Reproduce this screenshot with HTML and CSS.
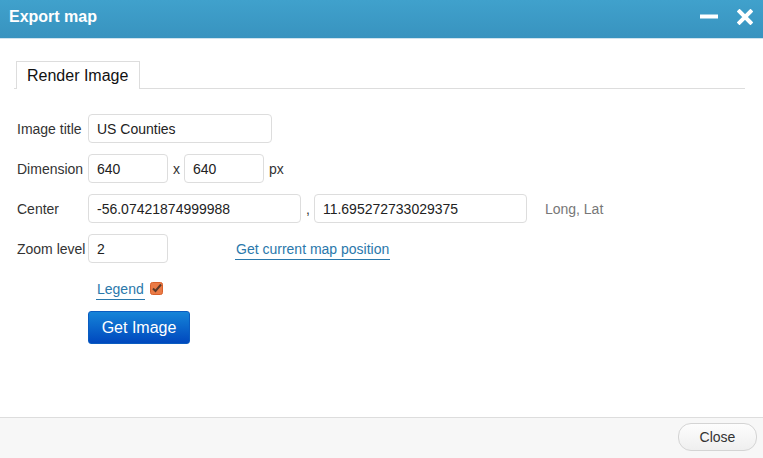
FILE: index.html
```html
<!DOCTYPE html>
<html lang="en">
<head>
    <meta charset="UTF-8">
    <title>Export map</title>
    <link rel="stylesheet" href="styles.css">
</head>
<body>
    <div class="dialog">
        <div class="titlebar">
            <span class="title">Export map</span>
            <div class="win-buttons">
                <svg class="win-min" width="18" height="5" viewBox="0 0 18 5"><rect x="0" y="0.5" width="18" height="4" fill="#fff"/></svg>
                <svg class="win-close" width="16" height="16" viewBox="0 0 16 16"><path d="M2.5 2.5 L13.5 13.5 M13.5 2.5 L2.5 13.5" stroke="#fff" stroke-width="4" stroke-linecap="square"/></svg>
            </div>
        </div>

        <div class="content">
            <div class="tabs">
                <div class="tab active">Render Image</div>
            </div>

            <div class="form">
                <div class="row">
                    <label for="imgTitle">Image title</label>
                    <input type="text" id="imgTitle" class="w-title" value="US Counties">
                </div>
                <div class="row">
                    <label for="dimW">Dimension</label>
                    <input type="text" id="dimW" class="w-small" value="640">
                    <span class="sep">x</span>
                    <input type="text" id="dimH" class="w-small" value="640">
                    <span class="unit">px</span>
                </div>
                <div class="row">
                    <label for="lng">Center</label>
                    <input type="text" id="lng" class="w-coord" value="-56.07421874999988">
                    <span class="sep">,</span>
                    <input type="text" id="lat" class="w-coord" value="11.695272733029375">
                    <span class="hint">Long, Lat</span>
                </div>
                <div class="row">
                    <label for="zoom">Zoom level</label>
                    <input type="text" id="zoom" class="w-small" value="2">
                    <a href="#" class="link map-pos">Get current map position</a>
                </div>
                <div class="row legend-row">
                    <a href="#" class="link">Legend</a>
                    <svg class="check" width="13" height="13" viewBox="0 0 13 13">
                        <rect x="0.5" y="0.5" width="12" height="12" rx="2" fill="#ea7a45" stroke="#d8602a"/>
                        <path d="M3 6.5 L5.5 9 L11 2.5" fill="none" stroke="#5a3a2a" stroke-width="2"/>
                    </svg>
                </div>
                <div class="row btn-row">
                    <button class="btn-primary">Get Image</button>
                </div>
            </div>
        </div>

        <div class="footer">
            <button class="btn-close">Close</button>
        </div>
    </div>
</body>
</html>
```

FILE: styles.css
```css
html, body {
    margin: 0;
    padding: 0;
    background: #fff;
}
body {
    font-family: "Liberation Sans", Arial, sans-serif;
    font-size: 14px;
    color: #333;
}
.dialog {
    width: 763px;
    height: 458px;
    display: flex;
    flex-direction: column;
}
.titlebar {
    height: 38px;
    flex-shrink: 0;
    border-bottom: 1px solid #cfe3ee;
    background: linear-gradient(to bottom, #40a1cc, #3893bf);
    display: flex;
    align-items: center;
    justify-content: space-between;
    padding: 0 10px 0 9px;
}
.title {
    color: #fff;
    font-weight: bold;
    font-size: 16px;
    margin-top: -4px;
}
.win-buttons {
    display: flex;
    align-items: center;
    gap: 19px;
    margin-top: -6px;
}
.win-close {
    margin-top: 1px;
}
.content {
    flex: 1;
    padding: 22px 18px 0 14px;
}
.tabs {
    display: flex;
    border-bottom: 1px solid #ddd;
    padding-left: 2px;
}
.tab {
    height: 27px;
    line-height: 27px;
    padding: 0 10px;
    font-size: 16px;
    color: #111;
    border: 1px solid #ddd;
    border-bottom: none;
    margin-bottom: -1px;
    background: #fff;
    width: 102px;
}
.form {
    padding: 25px 0 0 3px;
}
.row {
    display: flex;
    align-items: center;
    height: 29px;
    margin-bottom: 11px;
}
label {
    flex: 0 0 71px;
    min-width: 0;
    white-space: nowrap;
    color: #333;
}
input[type="text"] {
    height: 29px;
    box-sizing: border-box;
    border: 1px solid #ddd;
    border-radius: 4px;
    padding: 0 8px;
    font-family: "Liberation Sans", Arial, sans-serif;
    font-size: 14px;
    color: #222;
    background: #fff;
}
.w-title {
    width: 184px;
}
.w-small {
    width: 80px;
}
.w-coord {
    width: 213px;
}
.sep {
    margin: 0 4px 0 5px;
}
.unit {
    margin-left: 5px;
}
.hint {
    margin-left: 18px;
    color: #777;
}
.link {
    color: #2a78ab;
    text-decoration: none;
    border-bottom: 1px solid #2a78ab;
    padding: 0 1px 2px;
}
.map-pos {
    margin-left: 67px;
    margin-top: 3px;
}
.legend-row {
    padding-left: 79px;
    height: 24px;
    margin-top: 15px;
    margin-bottom: 11px;
}
.check {
    margin-left: 5px;
    margin-top: -4px;
}
.btn-primary {
    margin-left: 71px;
    width: 102px;
    height: 33px;
    border: 1px solid #0a5cc0;
    border-radius: 3px;
    background: linear-gradient(to bottom, #1584d8, #0048be);
    color: #fff;
    font-family: "Liberation Sans", Arial, sans-serif;
    font-size: 16px;
    cursor: pointer;
}
.footer {
    height: 40px;
    flex-shrink: 0;
    border-top: 1px solid #ddd;
    background: #f7f7f7;
    display: flex;
    justify-content: flex-end;
    align-items: center;
    padding-right: 6px;
}
.btn-close {
    width: 79px;
    height: 28px;
    border: 1px solid #d4d4d4;
    border-radius: 13px;
    background: linear-gradient(to bottom, #fdfdfd, #efefef);
    color: #333;
    font-family: "Liberation Sans", Arial, sans-serif;
    font-size: 14px;
    margin-top: -2px;
}
```
